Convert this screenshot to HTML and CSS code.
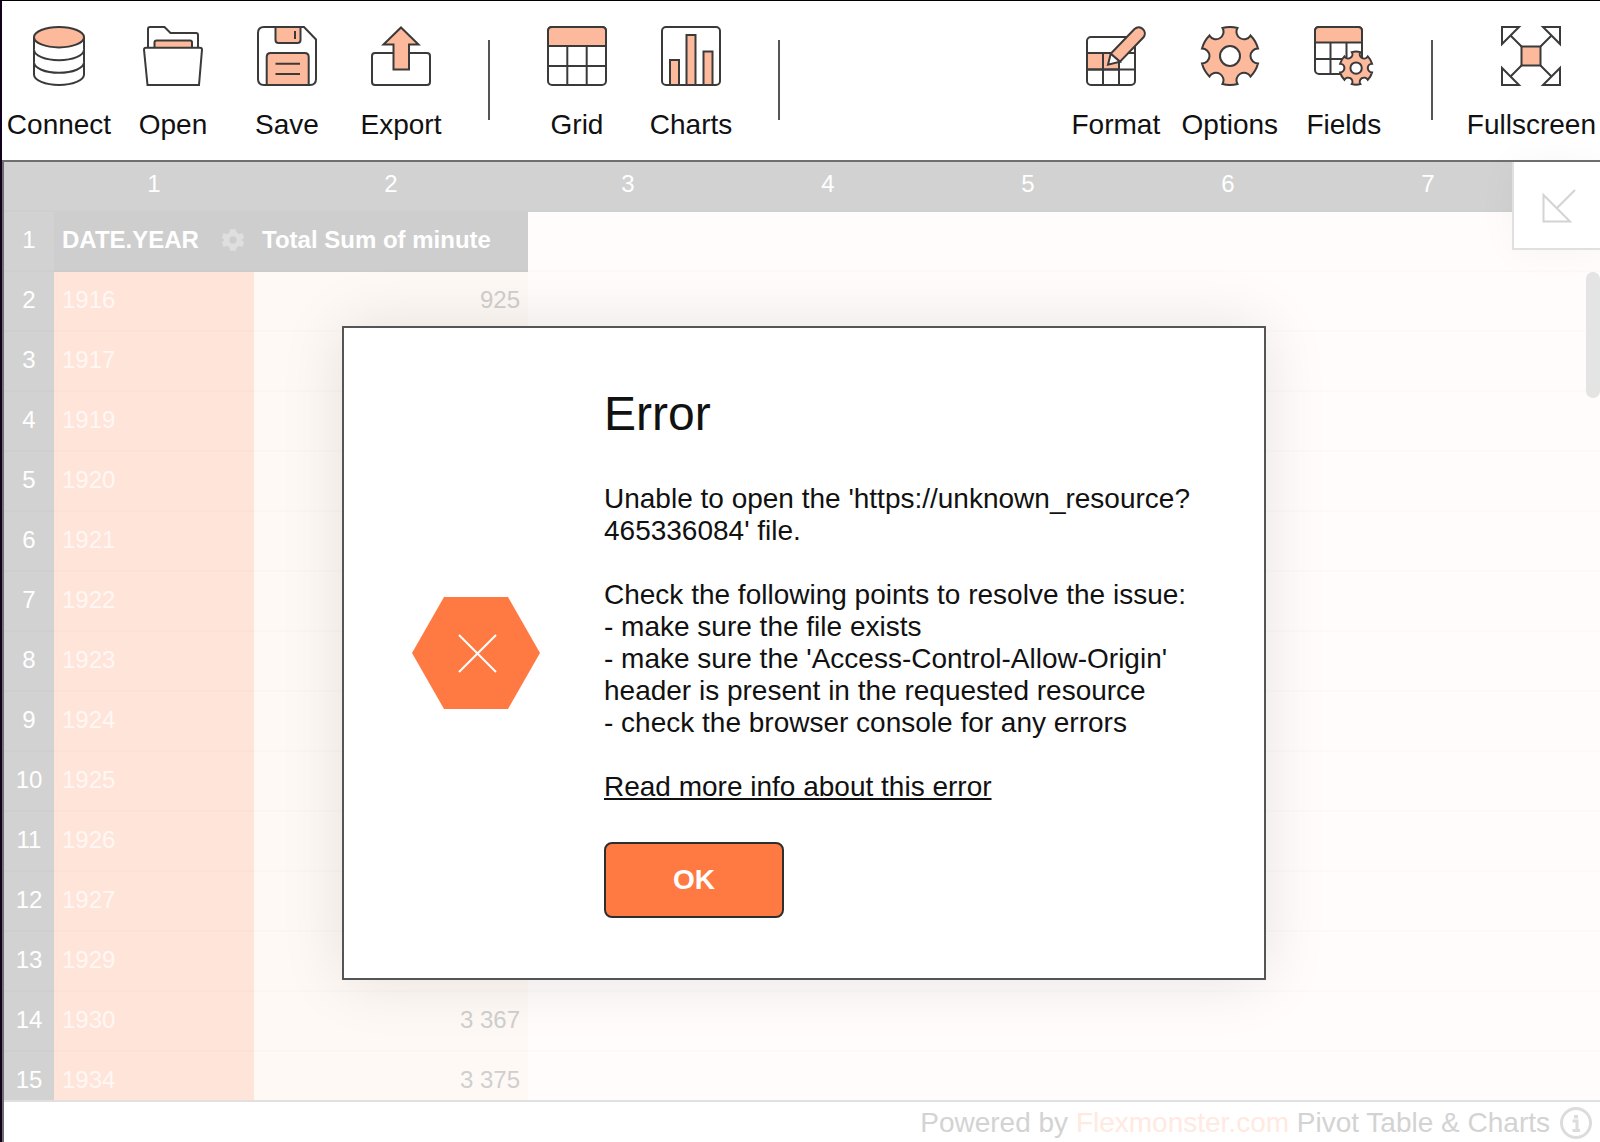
FILE: index.html
```html
<!DOCTYPE html>
<html lang="en">
<head>
  <meta charset="UTF-8" />
  <meta name="viewport" content="width=device-width, initial-scale=1.0"/>
  <title>Pivot Table</title>
  <link rel="stylesheet" href="styles.css">
</head>
<body>
  <div class="page">
    <nav class="toolbar">
      <button class="tab">
        <svg class="icon" viewBox="0 0 60 60">
          <path d="M5 11V48.500C5 54.300 16.200 59 30 59S55 54.300 55 48.500V11"/>
          <path d="M5 23.700C5 29.500 16.200 34.200 30 34.200S55 29.500 55 23.700M5 36.300C5 42.100 16.200 46.800 30 46.800S55 42.100 55 36.300"/>
          <ellipse class="tint" cx="30" cy="11.200" rx="25" ry="10.200"/>
        </svg>
        <span>Connect</span>
      </button>
      <button class="tab">
        <svg class="icon" viewBox="0 0 60 60">
          <path d="M5 22V3Q5 1 7 1H21.500L27.500 7H53Q55 7 55 9V22"/>
          <path class="tint" d="M11.500 22V16.500Q11.500 14.500 13.500 14.500H47Q49 14.500 49 16.500V22"/>
          <path d="M3 21.700H57Q59 21.700 59 23.700L56 59H4.500L1 23.700Q1 21.700 3 21.700Z"/>
        </svg>
        <span>Open</span>
      </button>
      <button class="tab">
        <svg class="icon" viewBox="0 0 60 60">
          <path d="M7 1H47L59 13.500V53Q59 59 53 59H7Q1 59 1 53V7Q1 1 7 1Z"/>
          <path class="tint" d="M18.500 1V14Q18.500 17 21.500 17H40.500Q43.500 17 43.500 14V1Z"/>
          <path class="tint" d="M9.700 59V31Q9.700 27 13.700 27H47.700Q51.700 27 51.700 31V59Z"/>
          <path d="M38 5V13M18.500 37.700H43M18.500 48H43"/>
        </svg>
        <span>Save</span>
      </button>
      <button class="tab">
        <svg class="icon" viewBox="0 0 60 60">
          <rect x="1" y="27" width="58" height="32" rx="3"/>
          <path class="tint" d="M30 1.500L47.500 18.500H38V43.500H22.500V18.500H12.500Z"/>
        </svg>
        <span>Export</span>
      </button>
      <div class="divider"></div>
      <button class="tab">
        <svg class="icon" viewBox="0 0 60 60">
          <rect x="1" y="1" width="58" height="58" rx="4"/>
          <path class="tint" d="M1 20V5Q1 1 5 1H55Q59 1 59 5V20Z"/>
          <path d="M1 40H59M20.300 20V59M39.700 20V59"/>
        </svg>
        <span>Grid</span>
      </button>
      <button class="tab">
        <svg class="icon" viewBox="0 0 60 60">
          <rect x="1" y="1" width="58" height="58" rx="4"/>
          <path class="tint" d="M9 59V34H18V59M25.500 59V9H34.500V59M42.500 59V25.500H51.500V59"/>
          <path d="M5 59H55"/>
        </svg>
        <span>Charts</span>
      </button>
      <div class="divider"></div>

      <button class="tab push">
        <svg class="icon" viewBox="0 0 60 60">
          <rect x="1" y="11" width="48" height="48" rx="4"/>
          <path class="tint" d="M1 27H33V43.500H1Z"/>
          <path d="M1 27H49M1 43.500H49M17 27V59M33 27V59"/>
          <path class="tint" d="M24.700 27.700L48.500 3C54 -2 62 5 57.500 11.300L34 35.700Z"/>
          <path class="blank" d="M24.700 27.700L22 38.700L34 35.700Z"/>
        </svg>
        <span>Format</span>
      </button>
      <button class="tab">
        <svg class="icon" viewBox="0 0 60 60">
          <path class="tint" d="M22.500 2A29 29 0 0 1 37.500 2A7.500 7.500 0 0 0 50.500 9.500A29 29 0 0 1 58 22.500A7.500 7.500 0 0 0 58 37.500A29 29 0 0 1 50.500 50.500A7.500 7.500 0 0 0 37.500 58A29 29 0 0 1 22.500 58A7.500 7.500 0 0 0 9.500 50.500A29 29 0 0 1 2 37.500A7.500 7.500 0 0 0 2 22.500A29 29 0 0 1 9.500 9.500A7.500 7.500 0 0 0 22.500 2Z"/>
          <circle cx="30" cy="30" r="10"/>
        </svg>
        <span>Options</span>
      </button>
      <button class="tab">
        <svg class="icon" viewBox="0 0 60 60">
          <rect x="1" y="1" width="47" height="47" rx="4"/>
          <path class="tint" d="M1 16.500V5Q1 1 5 1H44Q48 1 48 5V16.500Z"/>
          <path d="M1 33H48M16.500 16.500V48M32.500 16.500V48"/>
          <g transform="translate(25 25) scale(.57)">
            <path class="tint" d="M22.500 2A29 29 0 0 1 37.500 2A7.500 7.500 0 0 0 50.500 9.500A29 29 0 0 1 58 22.500A7.500 7.500 0 0 0 58 37.500A29 29 0 0 1 50.500 50.500A7.500 7.500 0 0 0 37.500 58A29 29 0 0 1 22.500 58A7.500 7.500 0 0 0 9.500 50.500A29 29 0 0 1 2 37.500A7.500 7.500 0 0 0 2 22.500A29 29 0 0 1 9.500 9.500A7.500 7.500 0 0 0 22.500 2Z"/>
            <circle cx="30" cy="30" r="10"/>
          </g>
        </svg>
        <span>Fields</span>
      </button>
      <div class="divider"></div>
      <button class="tab">
        <svg class="icon" viewBox="0 0 60 60">
          <path d="M9.500 9.500L20.500 20.500M50.500 9.500L39.500 20.500M9.500 50.500L20.500 39.500M50.500 50.500L39.500 39.500"/>
          <path class="tint" d="M20.500 20.500H39.500V39.500H20.500Z"/>
          <path d="M1 1H18L1 18ZM59 1V18L42 1ZM1 59V42L18 59ZM59 59H42L59 42Z"/>
        </svg>
        <span>Fullscreen</span>
      </button>
    </nav>

    <main class="pivot">
      <div class="grid-view">
        <table class="grid">
          <colgroup>
            <col class="col-num"><col class="col-year"><col class="col-total">
            <col class="col"><col class="col"><col class="col"><col class="col"><col class="col"><col>
          </colgroup>
          <thead>
            <tr><th></th><th>1</th><th>2</th><th>3</th><th>4</th><th>5</th><th>6</th><th>7</th><th></th></tr>
          </thead>
          <tbody>
            <tr>
              <th>1</th>
              <td class="head">
                <div class="head-cell">DATE.YEAR
                  <svg class="gear" viewBox="0 0 60 60"><path fill-rule="evenodd" d="M22 1H38L40 10L47 14L56 11L60 24L53 30L60 36L56 49L47 46L40 50L38 59H22L20 50L13 46L4 49L0 36L7 30L0 24L4 11L13 14L20 10ZM30 20A10 10 0 1 0 30 40A10 10 0 1 0 30 20Z"/></svg>
                </div>
              </td>
              <td class="head">Total Sum of minute</td>
              <td></td><td></td><td></td><td></td><td></td><td></td>
            </tr>
            <tr><th>2</th><td class="year">1916</td><td class="total">925</td><td></td><td></td><td></td><td></td><td></td><td></td></tr>
            <tr><th>3</th><td class="year">1917</td><td class="total"></td><td></td><td></td><td></td><td></td><td></td><td></td></tr>
            <tr><th>4</th><td class="year">1919</td><td class="total"></td><td></td><td></td><td></td><td></td><td></td><td></td></tr>
            <tr><th>5</th><td class="year">1920</td><td class="total"></td><td></td><td></td><td></td><td></td><td></td><td></td></tr>
            <tr><th>6</th><td class="year">1921</td><td class="total"></td><td></td><td></td><td></td><td></td><td></td><td></td></tr>
            <tr><th>7</th><td class="year">1922</td><td class="total"></td><td></td><td></td><td></td><td></td><td></td><td></td></tr>
            <tr><th>8</th><td class="year">1923</td><td class="total"></td><td></td><td></td><td></td><td></td><td></td><td></td></tr>
            <tr><th>9</th><td class="year">1924</td><td class="total"></td><td></td><td></td><td></td><td></td><td></td><td></td></tr>
            <tr><th>10</th><td class="year">1925</td><td class="total"></td><td></td><td></td><td></td><td></td><td></td><td></td></tr>
            <tr><th>11</th><td class="year">1926</td><td class="total"></td><td></td><td></td><td></td><td></td><td></td><td></td></tr>
            <tr><th>12</th><td class="year">1927</td><td class="total"></td><td></td><td></td><td></td><td></td><td></td><td></td></tr>
            <tr><th>13</th><td class="year">1929</td><td class="total"></td><td></td><td></td><td></td><td></td><td></td><td></td></tr>
            <tr><th>14</th><td class="year">1930</td><td class="total">3 367</td><td></td><td></td><td></td><td></td><td></td><td></td></tr>
            <tr><th>15</th><td class="year">1934</td><td class="total">3 375</td><td></td><td></td><td></td><td></td><td></td><td></td></tr>
          </tbody>
        </table>
        <div class="scrollbar"></div>
      </div>

      <button class="fields-toggle" aria-label="Open fields">
        <svg viewBox="0 0 34 34"><path d="M1.500 6V32.500H28ZM15 19L33 1"/></svg>
      </button>

      <footer class="credits">
        <span>Powered by <a href="#">Flexmonster.com</a> Pivot Table &amp; Charts</span>
        <svg class="info" viewBox="0 0 32 32">
          <circle cx="16" cy="16" r="14.500"/>
          <path d="M12.500 14H17V23M12.500 23.500H20"/>
          <path class="dot" d="M14 8H18V11.500H14Z"/>
        </svg>
      </footer>

      <div class="overlay">
        <div class="dialog" role="alertdialog" aria-labelledby="errorTitle">
          <svg class="error-icon" viewBox="0 0 128 112">
            <path class="hex" d="M32 0H96L128 56L96 112H32L0 56Z"/>
            <path class="cross" d="M47 38L84 75M84 38L47 75"/>
          </svg>
          <div class="dialog-body">
            <h1 id="errorTitle">Error</h1>
            <p>Unable to open the 'https://unknown_resource?<br>465336084' file.</p>
            <p>Check the following points to resolve the issue:<br>
              - make sure the file exists<br>
              - make sure the 'Access-Control-Allow-Origin' header is present in the requested resource<br>
              - check the browser console for any errors</p>
            <p><a href="#">Read more info about this error</a></p>
            <button class="btn">OK</button>
          </div>
        </div>
      </div>
    </main>
  </div>
</body>
</html>
```

FILE: styles.css
```css
* {
  box-sizing: border-box;
}
body {
  margin: 0;
  font-family: Arial, 'Liberation Sans', sans-serif;
  color: #111;
  background: #fff;
}
button {
  font-family: inherit;
  cursor: pointer;
}
.page {
  display: flex;
  flex-direction: column;
  height: 100vh;
  border-top: 1px solid #000;
  border-left: 2px solid #12001f;
}

/* toolbar */
.toolbar {
  display: flex;
  height: 159px;
}
.tab {
  display: flex;
  flex-direction: column;
  align-items: center;
  gap: 23px;
  min-width: 114px;
  padding: 25px 4px 0;
  border: none;
  background: none;
  color: #111;
  font-size: 28px;
  line-height: 32px;
}
.push {
  margin-left: auto;
}
.icon {
  width: 60px;
  height: 60px;
  fill: #fff;
  stroke: #3a3a3a;
  stroke-width: 2;
}
.icon path,
.icon circle {
  vector-effect: non-scaling-stroke;
}
.icon .tint {
  fill: #fcb99b;
}
.divider {
  width: 2px;
  height: 80px;
  margin: 39px 30px 0;
  background: #555;
}

/* grid */
.pivot {
  position: relative;
  flex: 1;
  display: flex;
  flex-direction: column;
  min-height: 0;
  border-top: 2px solid #6f6f6f;
  border-left: 2px solid #6f6f6f;
}
.grid-view {
  position: relative;
  flex: 1;
  overflow: hidden;
  background: #fffcfb;
}
.grid {
  width: 100%;
  table-layout: fixed;
  border-collapse: separate;
  border-spacing: 0;
  font-size: 24px;
}
.col-num {
  width: 50px;
}
.col-year,
.col {
  width: 200px;
}
.col-total {
  width: 274px;
}
.grid th,
.grid td {
  height: 60px;
  padding: 0 8px 2px;
  border-bottom: 2px solid rgba(150, 120, 110, 0.02);
}
.grid th {
  padding: 0 0 2px;
  background: #d2d2d2;
  color: #fff;
  font-weight: normal;
}
.grid thead th {
  height: 50px;
  padding-bottom: 4px;
}
.grid .head {
  background: #cecece;
  color: #fff;
  font-weight: bold;
}
.head-cell {
  display: flex;
  align-items: center;
  justify-content: space-between;
}
.gear {
  width: 22px;
  height: 22px;
  margin-right: 2px;
  fill: #dfdfdf;
}
.grid .year {
  background: #ffe4da;
  color: #fff7f3;
}
.grid .total {
  background: #fef9f5;
  color: #cfcfcf;
  text-align: right;
}
.scrollbar {
  position: absolute;
  top: 110px;
  right: 0;
  width: 14px;
  height: 126px;
  border-radius: 7px;
  background: #e4e4e4;
}
.fields-toggle {
  position: absolute;
  top: 0;
  right: 0;
  width: 88px;
  height: 88px;
  padding: 4px 0 0 4px;
  border: solid #e0e0e0;
  border-width: 0 0 2px 2px;
  background: #fff;
  box-shadow: 0 0 40px rgba(0, 0, 0, 0.04);
}
.fields-toggle svg {
  width: 34px;
  height: 34px;
  fill: none;
  stroke: #d3d3d3;
  stroke-width: 2;
}
.credits {
  display: flex;
  align-items: center;
  justify-content: flex-end;
  gap: 10px;
  height: 42px;
  padding: 2px 8px 0 0;
  border-top: 2px solid #e0e0e0;
  background: #fff;
  color: #d3d3d3;
  font-size: 28px;
}
.credits a {
  color: #ffe9e1;
  text-decoration: none;
}
.info {
  width: 32px;
  height: 32px;
  fill: none;
  stroke: #dcdcdc;
  stroke-width: 3;
}
.info .dot {
  fill: #dcdcdc;
  stroke: none;
}

/* error popup */
.overlay {
  position: absolute;
  inset: 0;
  display: flex;
  align-items: center;
  justify-content: center;
  padding: 2px 0 0 4px;
  pointer-events: none;
}
.dialog {
  display: flex;
  align-items: center;
  gap: 64px;
  width: 924px;
  padding: 60px 60px 60px 68px;
  border: 2px solid #555;
  background: #fff;
  box-shadow: 0 0 60px rgba(0, 0, 0, 0.1);
  pointer-events: auto;
}
.error-icon {
  flex: none;
  width: 128px;
  height: 112px;
}
.hex {
  fill: #ff7943;
}
.cross {
  stroke: #fff;
  stroke-width: 2;
}
.dialog-body {
  flex: 1;
  font-size: 28px;
  line-height: 32px;
}
.dialog-body h1 {
  margin: 0 0 43px;
  font-size: 48px;
  font-weight: normal;
  line-height: 52px;
}
.dialog-body p {
  margin: 0 0 32px;
}
.dialog-body a {
  color: #111;
}
.btn {
  display: block;
  width: 180px;
  height: 76px;
  margin-top: 39px;
  border: 2px solid #2e2e2e;
  border-radius: 8px;
  background: #ff7943;
  color: #fff;
  font-size: 28px;
  font-weight: bold;
}
```
